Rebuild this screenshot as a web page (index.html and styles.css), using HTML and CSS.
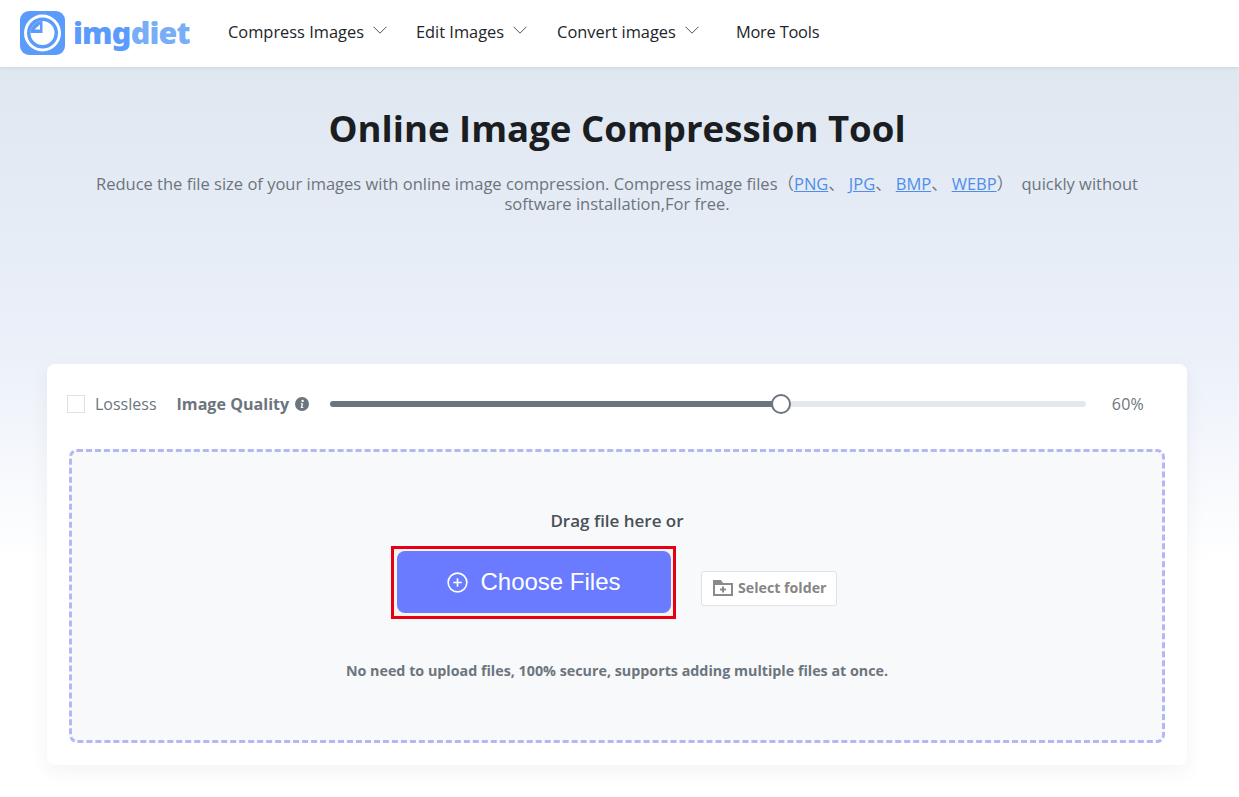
FILE: index.html
```html
<!DOCTYPE html>
<html lang="en">
<head>
    <meta charset="UTF-8">
    <meta name="viewport" content="width=device-width, initial-scale=1.0">
    <title>Online Image Compression Tool</title>
    <link rel="stylesheet" href="styles.css">
</head>
<body>

<!-- Header -->
<header class="header">
    <a class="logo" href="#">
        <svg class="logo-icon" width="45" height="44" viewBox="0 0 45 44">
            <rect width="45" height="44" rx="9" fill="#5b9bfb"/>
            <circle cx="22.500" cy="22" r="18.500" fill="#fff"/>
            <circle cx="22.500" cy="22" r="15.500" fill="#5b9bfb"/>
            <circle cx="22.500" cy="22" r="12" fill="#fff"/>
            <path d="M22.500 22H10.500A12 12 0 0 1 22.500 10z" fill="#5b9bfb"/>
            <path d="M14.500 18.500h5.500v-5z" fill="#fff"/>
        </svg>
        <span class="logo-text">img<span class="logo-light">diet</span></span>
    </a>
    <nav class="nav">
        <a class="nav-item" href="#">Compress Images
            <svg class="chev" width="14" height="8" viewBox="0 0 14 8"><path d="M.5.700 7 7.200 13.500.700"/></svg>
        </a>
        <a class="nav-item" href="#">Edit Images
            <svg class="chev" width="14" height="8" viewBox="0 0 14 8"><path d="M.5.700 7 7.200 13.500.700"/></svg>
        </a>
        <a class="nav-item" href="#">Convert images
            <svg class="chev" width="14" height="8" viewBox="0 0 14 8"><path d="M.5.700 7 7.200 13.500.700"/></svg>
        </a>
        <a class="nav-item" href="#">More Tools</a>
    </nav>
</header>

<main class="main">
    <!-- Intro -->
    <h1 class="title">Online Image Compression Tool</h1>
    <p class="intro"><span>Reduce the file size of your images with online image compression. Compress image files（</span><a href="#">PNG</a><span class="sep">、</span><a href="#">JPG</a><span class="sep">、</span><a href="#">BMP</a><span class="sep">、</span><a href="#">WEBP</a><span class="sep">）</span> <span>quickly without</span> <span>software installation,For free.</span></p>

    <!-- Tool card -->
    <section class="card">
        <div class="options">
            <label class="lossless"><span class="checkbox"></span>Lossless</label>
            <span class="quality">Image Quality
                <svg width="14" height="14" viewBox="0 0 14 14">
                    <circle cx="7" cy="7" r="7" fill="#6c757d"/>
                    <circle cx="7.600" cy="3.900" r="1.200" fill="#fff"/>
                    <path d="M5.700 6.200h2.500l-.9 3.900h1v.9H5.700l.9-3.900h-.9z" fill="#fff"/>
                </svg>
            </span>
            <div class="slider">
                <div class="slider-fill"></div>
                <div class="slider-thumb"></div>
            </div>
            <span class="percent">60%</span>
        </div>

        <div class="dropzone">
            <p class="drag">Drag file here or</p>
            <div class="actions">
                <div class="choose-frame">
                    <button class="choose">
                        <svg width="21" height="21" viewBox="0 0 22 22" fill="none" stroke="#fff" stroke-width="1.700">
                            <circle cx="11" cy="11" r="9.800"/>
                            <path d="M11 6.500v9M6.500 11h9"/>
                        </svg>
                        Choose Files
                    </button>
                </div>
                <button class="folder">
                    <svg width="20" height="16" viewBox="0 0 20 16">
                        <path d="M0 0h8l2 3h10v13H0z" fill="#8a8a8a"/>
                        <path d="M2 5h16v9H2z" fill="#fff"/>
                        <path d="M10 6.500v6M7 9.500h6" stroke="#8a8a8a" stroke-width="2"/>
                    </svg>
                    Select folder
                </button>
            </div>
            <p class="note">No need to upload files, 100% secure, supports adding multiple files at once.</p>
        </div>
    </section>
</main>

</body>
</html>
```

FILE: styles.css
```css
* {
    box-sizing: border-box;
}
body {
    margin: 0;
    min-height: 797px;
    font-family: "Open Sans", "Noto Sans", "Noto Sans CJK SC", sans-serif;
    color: #212529;
    background: #fff;
    overflow: hidden;
}
a {
    text-decoration: none;
    color: inherit;
}
.header {
    display: flex;
    align-items: center;
    height: 67px;
    padding-left: 20px;
    padding-bottom: 3px;
    background-color: #fff;
    box-shadow: 0 1px 4px rgba(0, 0, 0, 0.08);
    position: relative;
}
.logo {
    display: flex;
    align-items: center;
    gap: 8px;
    width: 208px;
}
.logo-icon {
    flex: none;
    margin-top: 1px;
}
.logo-text {
    font-family: "Noto Sans", sans-serif;
    font-size: 30.500px;
    font-weight: 900;
    line-height: 40px;
    letter-spacing: -0.8px;
    color: #5b9bfb;
}
.logo-light {
    color: #78adf8;
}
.nav {
    display: flex;
    align-items: center;
    margin-bottom: 2px;
}
.nav-item {
    display: flex;
    align-items: center;
    gap: 9px;
    margin-right: 29px;
    font-size: 16.400px;
    color: #212529;
}
.chev {
    fill: none;
    stroke: #555;
    stroke-width: 1;
    margin-top: -2px;
}
.nav-item:nth-child(2) {
    margin-right: 30px;
}
.nav-item:nth-child(3) {
    margin-right: 37px;
}
.nav-item:nth-child(4) {
    letter-spacing: -0.2px;
}
.main {
    height: 730px;
    padding: 36px 52px 0 47px;
    background: linear-gradient(180deg, #dfe7f1 0%, #ebf0f9 38%, #ffffff 68%);
}
.title {
    margin: 0;
    text-align: center;
    font-size: 36.600px;
    font-weight: 700;
    line-height: 50px;
    color: #1a1d21;
}
.intro {
    width: 1060px;
    margin: 21px auto 0;
    text-align: center;
    font-size: 16.500px;
    line-height: 20px;
    color: #6c757d;
}
.intro span {
    display: inline-block;
}
.intro a {
    color: #4f8fec;
    text-decoration: underline;
}
.intro .sep {
    width: 20.500px;
    text-align: left;
}
.card {
    height: 401px;
    margin-top: 150px;
    padding: 0 22px;
    background-color: #fff;
    border-radius: 8px;
    box-shadow: 0 6px 20px rgba(30, 50, 90, 0.06);
}
.options {
    display: flex;
    align-items: center;
    height: 85px;
    padding-bottom: 5px;
    margin-left: -2px;
}
.lossless {
    display: flex;
    align-items: center;
    gap: 10px;
    font-size: 16px;
    color: #6c757d;
}
.checkbox {
    width: 18px;
    height: 18px;
    border: 1px solid #dee2e6;
    background-color: #fff;
}
.quality {
    display: flex;
    align-items: center;
    gap: 6px;
    margin-left: 20px;
    font-size: 16.100px;
    font-weight: 700;
    color: #6c757d;
}
.slider {
    position: relative;
    width: 756px;
    height: 6px;
    margin-left: 20.500px;
    border-radius: 3px;
    background-color: #e4e7eb;
}
.slider-fill {
    width: 60%;
    height: 100%;
    border-radius: 3px;
    background-color: #6c757d;
}
.slider-thumb {
    position: absolute;
    left: 441px;
    top: -7px;
    width: 20px;
    height: 20px;
    border: 2px solid #6c757d;
    border-radius: 50%;
    background-color: #fff;
}
.percent {
    margin-left: 26px;
    font-size: 16px;
    letter-spacing: 0.3px;
    color: #6c757d;
}
.dropzone {
    height: 294px;
    padding-top: 59px;
    border: 3px dashed #b3b8f5;
    border-radius: 8px;
    background-color: #f8f9fb;
    text-align: center;
}
.drag {
    margin: 0;
    font-size: 17px;
    font-weight: 600;
    line-height: 20px;
    color: #495057;
}
.actions {
    display: flex;
    align-items: center;
    margin-top: 15px;
    margin-left: 319px;
}
.choose-frame {
    padding: 2px 2px 3px 3px;
    border: 3px solid #e60012;
    background-color: #f7f3ee;
}
.choose {
    display: flex;
    align-items: center;
    justify-content: center;
    gap: 12px;
    width: 274px;
    height: 62px;
    border: none;
    border-radius: 8px;
    background-color: #6a7bff;
    color: #fff;
    font-family: "Liberation Sans", Arial, sans-serif;
    font-size: 24px;
}
.folder {
    display: flex;
    align-items: center;
    gap: 5px;
    width: 136px;
    height: 35px;
    margin-left: 25px;
    margin-top: 12px;
    padding: 0 0 2px 11px;
    border: 1px solid #dee2e6;
    border-radius: 3px;
    background-color: #fff;
    font-family: "Open Sans", sans-serif;
    font-size: 14.200px;
    font-weight: 700;
    color: #868686;
}
.note {
    margin: 42px 0 0;
    font-size: 14.300px;
    font-weight: 700;
    line-height: 20px;
    color: #6c757d;
}
```
